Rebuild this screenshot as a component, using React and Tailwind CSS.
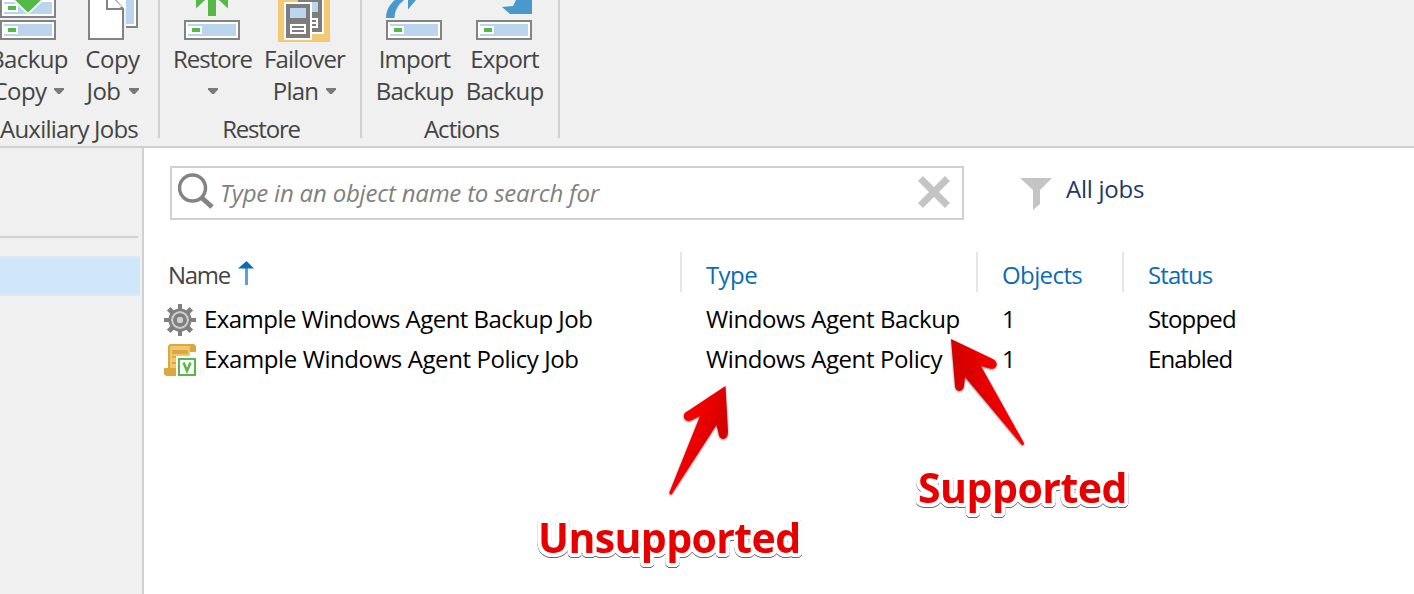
const sans = "font-['Open_Sans','Noto_Sans',sans-serif]";

function Server({ x, y }) {
  return (
    <g transform={`translate(${x} ${y})`} shapeRendering="crispEdges">
      <rect width="56" height="20" fill="#838383" />
      <rect x="2" y="2" width="52" height="16" fill="#fff" />
      <rect x="4" y="4" width="48" height="12" fill="#bcd5ee" />
      <rect x="4" y="6" width="14" height="8" fill="#fff" />
      <rect x="8" y="8" width="8" height="4" fill="#54b947" />
    </g>
  );
}

function Icon({ children, className = "" }) {
  return (
    <svg width="56" height="43" viewBox="0 0 56 43" className={`shrink-0 ${className}`}>
      {children}
    </svg>
  );
}

const BackupCopyIcon = () => (
  <Icon>
    <Server x={0} y={-2} />
    <Server x={0} y={20} />
    <path d="M12 0H44L28 15Z" fill="#fff" opacity=".7" />
    <path d="M15 0H41L28 12.5Z" fill="#54b947" />
  </Icon>
);

const CopyJobIcon = () => (
  <Icon>
    <path d="M30 -4H53V27H30" fill="#fff" stroke="#838383" strokeWidth="2" />
    <rect x="42" y="0" width="8" height="24" fill="#bcd5ee" />
    <rect x="40" y="8" width="2" height="34" fill="#f0f0f0" />
    <path d="M5 -4V39H39V9L31 0" fill="#fff" stroke="#838383" strokeWidth="2" />
    <path d="M23 -2V9H39" fill="none" stroke="#838383" strokeWidth="2" />
    <path d="M26 0H31L38 7H26Z" fill="#fff" />
  </Icon>
);

const RestoreIcon = () => (
  <Icon>
    <path d="M24 0H32V16H24ZM12 0H21L12 8.500ZM35 0H44V8.500Z" fill="#54b947" />
    <Server x={0} y={20} />
  </Icon>
);

const FailoverIcon = () => (
  <Icon>
    <g shapeRendering="crispEdges">
      <rect x="2" width="52" height="42" fill="#f3ca73" />
      <rect x="22" width="26" height="34" fill="#fff" />
      <rect x="22" width="24" height="32" fill="#7d7d7d" />
      <rect x="34" y="2" width="8" height="10" fill="#bcd5ee" />
      <rect x="34" y="18" width="8" height="10" fill="#fff" />
      <path d="M34 20H40V22H34ZM34 24H40V26H34Z" fill="#7d7d7d" />
      <rect x="8" y="2" width="28" height="38" fill="#fff" />
      <rect x="10" y="4" width="24" height="34" fill="#7d7d7d" />
      <rect x="14" y="8" width="16" height="10" fill="#bcd5ee" />
      <rect x="14" y="24" width="16" height="10" fill="#fff" />
      <path d="M16 26H28V28H16ZM16 30H28V32H16Z" fill="#7d7d7d" />
    </g>
  </Icon>
);

const ImportIcon = () => (
  <Icon>
    <path d="M0 18C0 10 4 4 9 0H18C12 5 9 10 8.500 18ZM22 0H30L22 9.500Z" fill="#4999cb" />
    <Server x={0} y={20} />
  </Icon>
);

const ExportIcon = () => (
  <Icon>
    <path d="M40 0H56V14H34L26 7L37 6Z" fill="#4999cb" />
    <Server x={0} y={20} />
  </Icon>
);

const Caret = () => (
  <svg width="10" height="6" viewBox="0 0 10 6" className="shrink-0">
    <path d="M0 0H10V1.500L6 6H4L0 1.500Z" fill="#7a7a7a" />
  </svg>
);

function RibbonButton({ icon, top, bottom, caret, className }) {
  return (
    <button className={`flex shrink-0 flex-col items-center ${className}`}>
      {icon}
      <span className="flex h-8 items-center pl-px whitespace-nowrap">{top}</span>
      <span className="flex h-8 items-center gap-2 pl-px whitespace-nowrap">
        {bottom && <span>{bottom}</span>}
        {caret && <Caret />}
      </span>
    </button>
  );
}

function RibbonGroup({ label, children, className, labelClass = "" }) {
  return (
    <section className={`flex h-[138px] shrink-0 flex-col border-r-2 border-[#d0d0d0] ${className}`}>
      <div className="flex h-[113px] shrink-0">{children}</div>
      <div className={`flex h-8 shrink-0 items-center justify-center whitespace-nowrap ${labelClass}`}>{label}</div>
    </section>
  );
}

const GearIcon = () => (
  <svg width="32" height="32" viewBox="0 0 32 32" className="shrink-0">
    <g fill="#808080">
      <path d="M14 0H18V32H14ZM0 14H32V18H0Z" />
      <path d="M13.500 0H18.500V32H13.500ZM0 13.500H32V18.500H0Z" transform="rotate(45 16 16)" />
    </g>
    <circle cx="16" cy="16" r="10" fill="#fff" stroke="#808080" strokeWidth="3" />
    <circle cx="16" cy="16" r="8" fill="none" stroke="#c8c8c8" strokeWidth="1.500" />
    <circle cx="16" cy="16" r="5" fill="#fff" stroke="#808080" strokeWidth="4" />
    <circle cx="16" cy="16" r="3" fill="#d0d0d0" />
  </svg>
);

const PolicyIcon = () => (
  <svg width="32" height="32" viewBox="0 0 32 32" className="shrink-0">
    <path d="M4 2H26V26H4Z" fill="#f0c670" />
    <path d="M6 0H30L32 2V8H26V2H6V24H12V32H2L0 30V24H4V2Z" fill="#dba93b" />
    <path d="M8 6H24V10H8ZM8 12H12V14H8ZM8 18H12V20H8Z" fill="#dba93b" />
    <rect x="12" y="12" width="20" height="20" fill="#fff" />
    <rect x="15" y="15" width="16" height="16" fill="#fff" stroke="#54b947" strokeWidth="2" />
    <path d="M19.500 18.500L23 27L26.500 18.500" fill="none" stroke="#54b947" strokeWidth="2.500" />
  </svg>
);

const columns = [
  { key: "type", label: "Type", cell: "w-[296px]" },
  { key: "objects", label: "Objects", cell: "w-[146px]" },
  { key: "status", label: "Status", cell: "w-[200px]" },
];

const jobs = [
  { name: "Example Windows Agent Backup Job", type: "Windows Agent Backup", objects: "1", status: "Stopped", tracking: "tracking-[-0.54px]", icon: <GearIcon /> },
  { name: "Example Windows Agent Policy Job", type: "Windows Agent Policy", objects: "1", status: "Enabled", tracking: "tracking-[-0.41px]", icon: <PolicyIcon /> },
];

function Callout({ text, className }) {
  return (
    <div
      className={`absolute whitespace-nowrap text-[41px] leading-[48px] font-bold text-[#e60000] [text-shadow:4px_0_#fff,3.7px_1.5px_#fff,2.8px_2.8px_#fff,1.5px_3.7px_#fff,0_4px_#fff,-1.5px_3.7px_#fff,-2.8px_2.8px_#fff,-3.7px_1.5px_#fff,-4px_0_#fff,-3.7px_-1.5px_#fff,-2.8px_-2.8px_#fff,-1.5px_-3.7px_#fff,0_-4px_#fff,1.5px_-3.7px_#fff,2.8px_-2.8px_#fff,3.7px_-1.5px_#fff] [filter:drop-shadow(0_1px_0.7px_rgba(0,0,0,0.6))] ${className}`}
    >
      {text}
    </div>
  );
}

export default function App() {
  return (
    <div className={`relative flex h-[594px] w-[1414px] flex-col overflow-hidden bg-white text-[24px] leading-8 tracking-[-0.5px] text-[#444] ${sans}`}>
      <header className="flex h-[148px] shrink-0 border-b-2 border-[#d0d0d0] bg-[#f0f0f0] tracking-[-0.8px]">
        <RibbonGroup label="Auxiliary Jobs" className="w-[160px]" labelClass="pr-5 tracking-[-0.8px]">
          <RibbonButton icon={<BackupCopyIcon />} top="Backup" bottom="Copy" caret className="-ml-[14px] w-[84px] tracking-[-0.6px]" />
          <RibbonButton icon={<CopyJobIcon />} top="Copy" bottom="Job" caret className="w-[84px] tracking-[-0.5px]" />
        </RibbonGroup>
        <RibbonGroup label="Restore" className="w-[202px]" labelClass="pl-[2px] tracking-[-1.2px]">
          <RibbonButton icon={<RestoreIcon />} top="Restore" caret className="ml-[10px] w-[84px] tracking-[-1px]" />
          <RibbonButton icon={<FailoverIcon />} top="Failover" bottom="Plan" caret className="w-[100px]" />
        </RibbonGroup>
        <RibbonGroup label="Actions" className="w-[198px]" labelClass="pl-[3px] tracking-[-0.95px]">
          <RibbonButton icon={<ImportIcon />} top="Import" bottom="Backup" className="ml-[7px] w-[90px]" />
          <RibbonButton icon={<ExportIcon />} top="Export" bottom="Backup" className="w-[90px]" />
        </RibbonGroup>
      </header>

      <div className="flex min-h-0 flex-1">
        <aside className="flex w-[144px] shrink-0 flex-col border-r-2 border-[#d0d0d0] bg-[#f0f0f0] pt-[88px]">
          <div className="mr-1 h-0.5 bg-[#d0d0d0]" />
          <div className="mt-[18px] mr-0.5 h-10 border-y-2 border-[#dce8f5] bg-[#d0e6f9]" />
        </aside>

        <main className="flex flex-1 flex-col pt-[18px] pl-5">
          <div className="flex">
            <div className="ml-1.5 flex h-[54px] w-[794px] items-center border-2 border-[#d0d0d0] pl-1.5">
              <svg width="38" height="38" viewBox="0 0 38 38" className="mb-0.5 shrink-0" fill="none" stroke="#838383">
                <circle cx="14.500" cy="15" r="13" strokeWidth="3.500" />
                <path d="M24 25L34 34" strokeWidth="5" />
              </svg>
              <span className="ml-1 flex-1 whitespace-nowrap text-[#808080] tracking-[-0.2px] italic">Type in an object name to search for</span>
              <svg width="32" height="32" viewBox="0 0 32 32" className="mr-3 mb-0.5" stroke="#c4c4c4" strokeWidth="7">
                <path d="M2.500 2.500L29.500 29.500M29.500 2.500L2.500 29.500" />
              </svg>
            </div>
            <svg width="32" height="32" viewBox="0 0 32 32" className="mt-3 ml-14">
              <path d="M0 0H32L20 12V26L13 32V12Z" fill="#c4c4c4" />
            </svg>
            <div className="mt-[7px] ml-[14px] whitespace-nowrap tracking-[-0.25px] text-[#1f3864]">All jobs</div>
          </div>

          <div className="mt-8 flex h-10 shrink-0 text-[#0a6cb4]">
            <div className="flex w-[516px] items-center pt-1.5 pl-1 tracking-[-1.3px] text-[#444]">
              Name
              <svg width="16" height="24" viewBox="0 0 16 24" className="mb-1 ml-2">
                <path d="M7 6H10V24H7Z" fill="#5ba3d6" />
                <path d="M8.500 0L16 7.500H0Z" fill="#0a6cb4" />
              </svg>
            </div>
            {columns.map((c) => (
              <div key={c.key} className={`flex items-center border-l-2 border-[#e6e6e6] pt-1.5 pl-6 ${c.key === "status" ? "tracking-[-0.9px]" : "tracking-[-0.6px]"} ${c.cell}`}>
                {c.label}
              </div>
            ))}
          </div>
          <div className="mt-[7px] text-black">
            {jobs.map((job) => (
              <div key={job.name} className={`flex h-10 items-center whitespace-nowrap ${job.tracking}`}>
                <div className="flex w-[516px] items-center gap-2">
                  <span className="mt-0.5">{job.icon}</span>
                  {job.name}
                </div>
                {columns.map((c) => (
                  <div key={c.key} className={`pl-[26px] ${c.cell} ${c.key === "status" ? "tracking-[-0.85px]" : "tracking-[-0.4px]"}`}>
                    {job[c.key]}
                  </div>
                ))}
              </div>
            ))}
          </div>
        </main>
      </div>

      <svg width="1414" height="594" viewBox="0 0 1414 594" className="pointer-events-none absolute inset-0 [filter:drop-shadow(0_1px_1px_rgba(0,0,0,0.5))]">
        <defs>
          <linearGradient id="left" x1="0" y1="0" x2="1" y2="0.600">
            <stop offset="0.450" stopColor="#f40000" />
            <stop offset="0.800" stopColor="#d60000" />
          </linearGradient>
          <linearGradient id="right" x1="0" y1="0.400" x2="1" y2="0">
            <stop offset="0.200" stopColor="#d60000" />
            <stop offset="0.550" stopColor="#f40000" />
          </linearGradient>
        </defs>
        <path d="M725.500 386L728 432C728 441 719 441 718.500 433L716.500 425L672.500 493C671 496 669 494 669.500 492L700 416L691 420.500C684 423 681 414 687 411.500Z" fill="url(#left)" />
        <path d="M951 339L993 359C1000 363 996 370 990 368.500L981 366L1024 443C1024 445 1022 446 1021 444L965 377L964 386C963 393 955 392 955 386Z" fill="url(#right)" />
      </svg>
      <Callout text="Unsupported" className="top-[513px] left-[538px] tracking-[-0.6px]" />
      <Callout text="Supported" className="top-[463px] left-[918px]" />
    </div>
  );
}
